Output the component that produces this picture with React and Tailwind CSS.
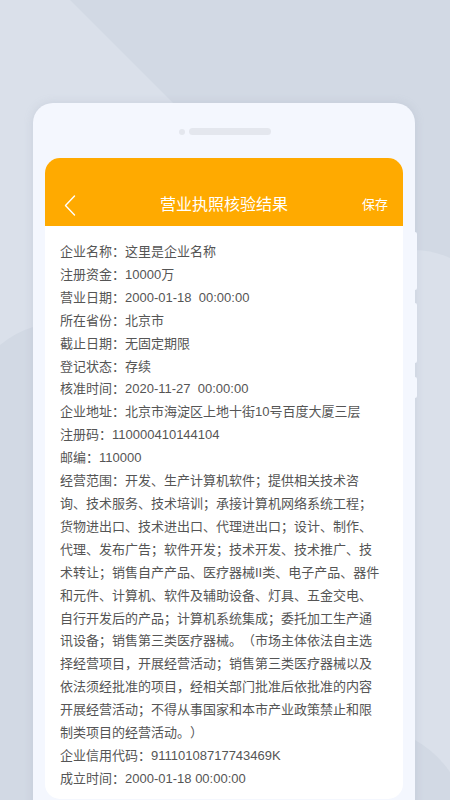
import React from 'react';

const fields = [
  ['企业名称', '这里是企业名称'],
  ['注册资金', '10000万'],
  ['营业日期', '2000-01-18  00:00:00'],
  ['所在省份', '北京市'],
  ['截止日期', '无固定期限'],
  ['登记状态', '存续'],
  ['核准时间', '2020-11-27  00:00:00'],
  ['企业地址', '北京市海淀区上地十街10号百度大厦三层'],
  ['注册码', '110000410144104'],
  ['邮编', '110000'],
  [
    '经营范围',
    '开发、生产计算机软件；提供相关技术咨询、技术服务、技术培训；承接计算机网络系统工程；货物进出口、技术进出口、代理进出口；设计、制作、代理、发布广告；软件开发；技术开发、技术推广、技术转让；销售自产产品、医疗器械II类、电子产品、器件和元件、计算机、软件及辅助设备、灯具、五金交电、自行开发后的产品；计算机系统集成；委托加工生产通讯设备；销售第三类医疗器械。（市场主体依法自主选择经营项目，开展经营活动；销售第三类医疗器械以及依法须经批准的项目，经相关部门批准后依批准的内容开展经营活动；不得从事国家和本市产业政策禁止和限制类项目的经营活动。）',
  ],
  ['企业信用代码', '91110108717743469K'],
  ['成立时间', '2000-01-18 00:00:00'],
];

const Backdrop = () => (
  <svg className="absolute inset-0" width="450" height="800" viewBox="0 0 450 800">
    <rect width="450" height="800" fill="#dae0ea" />
    <path d="M70 0 L450 0 L450 258 Q432 250 415 250 L320 250 Z" fill="#d2d9e4" />
    <path d="M0 345 Q16 332 33 327 L120 320 L120 800 L0 800 Z" fill="#d2d9e4" />
    <path d="M415 740 Q436 752 450 772 L450 800 L415 800 Z" fill="#d2d9e4" />
  </svg>
);

export default function App() {
  return (
    <div className="relative w-[450px] h-[800px] overflow-hidden font-['Liberation_Sans','Noto_Sans_CJK_SC',sans-serif]">
      <Backdrop />

      <div className="relative ml-[33px] mt-[103px] w-[382px] h-[740px] rounded-[20px] bg-[#f4f7fe] shadow-[0_0_10px_rgba(140,152,175,0.22)]">
        {/* side buttons */}
        <div className="absolute right-[-2px] top-[129px] w-[2px] h-[58px] rounded-r bg-[#f4f7fe]" />
        <div className="absolute right-[-2px] top-[200px] w-[2px] h-[60px] rounded-r bg-[#f4f7fe]" />
        <div className="absolute right-[-2px] top-[274px] w-[2px] h-[21px] rounded-r bg-[#f4f7fe]" />

        <div className="flex items-center gap-[4px] pt-[25px] pl-[146px]">
          <span className="w-[6px] h-[6px] rounded-full bg-[#e4e7ee]" />
          <span className="w-[82px] h-[7px] rounded-full bg-[#e4e7ee]" />
        </div>

        <div className="mt-[23px] ml-[12px] w-[358px] rounded-[15px] bg-white overflow-hidden">
          <div className="grid grid-cols-[1fr_auto_1fr] items-center h-[68px] pt-[26px] px-[15px] bg-[#ffaa00] text-white">
            <svg width="12" height="21" viewBox="0 0 12 21" className="ml-[4px]">
              <path d="M10.5 1 L1.5 10.5 L10.5 20" fill="none" stroke="#fff" strokeWidth="1.4" strokeLinecap="round" strokeLinejoin="round" />
            </svg>
            <span className="text-[16px] leading-[22px]">营业执照核验结果</span>
            <span className="justify-self-end text-[13px] leading-[20px]">保存</span>
          </div>

          <div className="pl-[15px] pr-[21px] pt-[15px] pb-[8px] text-[13px] leading-[22.9px] text-[#555] [text-spacing-trim:space-all]">
            {fields.map(([k, v]) => (
              <p key={k} className="whitespace-pre-wrap">
                {k}：{v}
              </p>
            ))}
          </div>
        </div>
      </div>
    </div>
  );
}
